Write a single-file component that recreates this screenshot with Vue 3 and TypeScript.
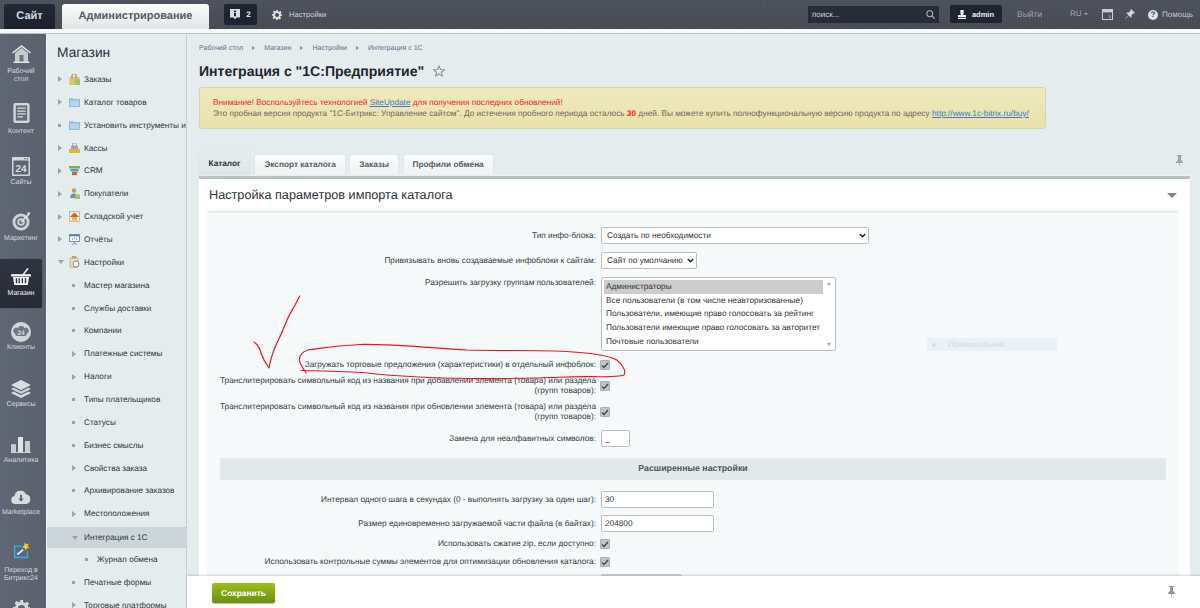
<script setup lang="ts">
interface RailItem { id: string; label: string[]; h: number; gap: number; active?: boolean }
interface MenuItem { label: string; level: number; arrow: 'right' | 'down' | 'dot'; icon?: string; active?: boolean }

const rail: RailItem[] = [
  { id: 'home', label: ['Рабочий', 'стол'], h: 58, gap: 5 },
  { id: 'doc', label: ['Контент'], h: 54, gap: 5 },
  { id: 'cal', label: ['Сайты'], h: 55, gap: 3 },
  { id: 'target', label: ['Маркетинг'], h: 55, gap: 4 },
  { id: 'basket', label: ['Магазин'], h: 49, gap: 5, active: true },
  { id: 'bubble', label: ['Клиенты'], h: 58, gap: 2 },
  { id: 'layers', label: ['Сервисы'], h: 57, gap: 3 },
  { id: 'bars', label: ['Аналитика'], h: 53, gap: 4 },
  { id: 'cloud', label: ['Marketplace'], h: 52, gap: 5 },
  { id: 'b24', label: ['Переход в', 'Битрикс24'], h: 58, gap: 8 },
  { id: 'gear', label: [], h: 30, gap: 0 },
]

const menu: MenuItem[] = [
  { label: 'Заказы', level: 0, arrow: 'right', icon: 'bag' },
  { label: 'Каталог товаров', level: 0, arrow: 'right', icon: 'folder' },
  { label: 'Установить инструменты и', level: 0, arrow: 'dot', icon: 'folder' },
  { label: 'Кассы', level: 0, arrow: 'right', icon: 'cash' },
  { label: 'CRM', level: 0, arrow: 'right', icon: 'crm' },
  { label: 'Покупатели', level: 0, arrow: 'right', icon: 'people' },
  { label: 'Складской учет', level: 0, arrow: 'right', icon: 'store' },
  { label: 'Отчёты', level: 0, arrow: 'right', icon: 'report' },
  { label: 'Настройки', level: 0, arrow: 'down', icon: 'clip' },
  { label: 'Мастер магазина', level: 1, arrow: 'dot' },
  { label: 'Службы доставки', level: 1, arrow: 'dot' },
  { label: 'Компании', level: 1, arrow: 'dot' },
  { label: 'Платежные системы', level: 1, arrow: 'right' },
  { label: 'Налоги', level: 1, arrow: 'right' },
  { label: 'Типы плательщиков', level: 1, arrow: 'dot' },
  { label: 'Статусы', level: 1, arrow: 'dot' },
  { label: 'Бизнес смыслы', level: 1, arrow: 'dot' },
  { label: 'Свойства заказа', level: 1, arrow: 'right' },
  { label: 'Архивирование заказов', level: 1, arrow: 'dot' },
  { label: 'Местоположения', level: 1, arrow: 'right' },
  { label: 'Интеграция с 1С', level: 1, arrow: 'down', active: true },
  { label: 'Журнал обмена', level: 2, arrow: 'dot' },
  { label: 'Печатные формы', level: 1, arrow: 'dot' },
  { label: 'Торговые платформы', level: 1, arrow: 'right' },
]

const crumbs = ['Рабочий стол', 'Магазин', 'Настройки', 'Интеграция с 1С']
const tabs = ['Экспорт каталога', 'Заказы', 'Профили обмена']
const groups = [
  'Администраторы',
  'Все пользователи (в том числе неавторизованные)',
  'Пользователи, имеющие право голосовать за рейтинг',
  'Пользователи имеющие право голосовать за авторитет',
  'Почтовые пользователи',
]
</script>

<template>
  <div class="page">
    <header class="top">
      <div class="tab-site">Сайт</div>
      <div class="tab-admin">Администрирование</div>
      <div class="notif">
        <svg width="10" height="11" viewBox="0 0 10 11"><path d="M0 0h10v8.500H6.500L5 10.500 3.500 8.500H0z" fill="#d8dbdf" /><rect x="4" y="1.500" width="2" height="1.500" fill="#1e2430" /><rect x="4" y="3.800" width="2" height="3.400" fill="#1e2430" /></svg>
        <b>2</b>
      </div>
      <div class="settings">
        <svg width="10" height="10" viewBox="0 0 24 24"><path fill-rule="evenodd" d="M10 0h4l.6 3.400 2.400 1 2.900-2 2.800 2.800-2 2.900 1 2.400L24 10v4l-3.300.6-1 2.400 2 2.900-2.800 2.800-2.900-2-2.400 1L14 24h-4l-.6-3.300-2.400-1-2.900 2-2.800-2.800 2-2.900-1-2.400L0 14v-4l3.300-.6 1-2.400-2-2.900 2.800-2.800 2.900 2 2.400-1zM12 7a5 5 0 1 0 0 10 5 5 0 0 0 0-10z" fill="#dfe2e5" /></svg>
        <span>Настройки</span>
      </div>
      <div class="spacer"></div>
      <div class="search">
        <span>поиск...</span>
        <svg width="9" height="9" viewBox="0 0 12 12"><circle cx="5" cy="5" r="3.900" fill="none" stroke="#a9aeb5" stroke-width="1.400" /><path d="M8 8l3.400 3.400" stroke="#a9aeb5" stroke-width="1.600" /></svg>
      </div>
      <div class="user">
        <svg width="8" height="9" viewBox="0 0 10 11"><path d="M3 0h4v4.500L6.300 6H10v3H0V6h3.700L3 4.500zM0 10h10v1H0z" fill="#f0f1f3" /></svg>
        <b>admin</b>
      </div>
      <span class="logout">Выйти</span>
      <span class="lang">RU<i></i></span>
      <svg class="win" width="11" height="11" viewBox="0 0 11 11"><rect x=".5" y=".5" width="10" height="10" fill="none" stroke="#c9ccd1" /><rect x="1" y="1" width="9" height="2.400" fill="#c9ccd1" /><path d="M6 7h3M7 8.500h2" stroke="#8e939b" /></svg>
      <svg class="pin" width="10" height="10" viewBox="0 0 10 10"><path d="M6 0l4 4-1 .6-.7-.3L6.500 6.200 6.600 8 5.800 8.600 3.600 6.400.8 9.600.4 9.200 3.600 6 1.400 4.200 2 3.400l1.800.1L5.700 1.700l-.3-.7z" fill="#d4d7db" /></svg>
      <div class="help">
        <span class="qm">?</span>
        <span>Помощь</span>
      </div>
    </header>

    <div class="strip"></div>

    <div class="body">
      <nav class="rail">
        <div v-for="r in rail" :key="r.id" class="rail-item" :class="{ on: r.active }" :style="{ height: r.h + 'px' }">
          <svg v-if="r.id === 'home'" width="19" height="18" viewBox="0 0 19 18"><path d="M9.500 0L19 7.500l-1 1L9.500 2 1 8.500l-1-1z" fill="#e1e4e6" /><path d="M3 8l6.500-5L16 8v9H3z" fill="#c6cacd" /><rect x="7.500" y="10" width="4" height="7" fill="#6d7480" /><rect x="1.500" y="16.500" width="16" height="1.500" fill="#e1e4e6" /></svg>
          <svg v-else-if="r.id === 'doc'" width="17" height="20" viewBox="0 0 17 21"><rect width="17" height="21" rx="2" fill="#d4d7da" /><rect x="2.500" y="2.500" width="12" height="16" fill="#656c79" /><path d="M4 5.500h9M4 8.500h9M4 11.500h9M4 14.500h6" stroke="#d8dbde" stroke-width="1.300" /></svg>
          <svg v-else-if="r.id === 'cal'" width="18" height="19" viewBox="0 0 18 19"><rect width="18" height="19" rx="1" fill="#d4d7da" /><rect x="1.500" y="3.500" width="15" height="14" fill="#5f6673" /><circle cx="13" cy="1.800" r=".8" fill="#5f6673" /><circle cx="15.500" cy="1.800" r=".8" fill="#5f6673" /><text x="9" y="15" text-anchor="middle" class="svg-24">24</text></svg>
          <svg v-else-if="r.id === 'target'" width="19" height="19" viewBox="0 0 20 20"><circle cx="9.500" cy="10.500" r="9" fill="#cfd3d6" /><circle cx="9.500" cy="10.500" r="6" fill="#666d7a" /><circle cx="9.500" cy="10.500" r="4" fill="#cfd3d6" /><circle cx="9.500" cy="10.500" r="2" fill="#666d7a" /><path d="M9.500 10.500L18 2" stroke="#e4e6e8" stroke-width="1.500" /><path d="M16 1l3-1-.5 2.500-2 1z" fill="#e4e6e8" /></svg>
          <svg v-else-if="r.id === 'basket'" width="20" height="18" viewBox="0 0 22 20"><path d="M12 9l6-8 1.500 1L14 9z" fill="#f4f5f6" /><rect x="0" y="8" width="22" height="2.500" fill="#f4f5f6" /><path d="M2 11h18l-1.500 9h-15z" fill="#f4f5f6" /><path d="M6 12.500v5.500M9 12.500v5.500M12.500 12.500v5.500M16 12.500v5.500" stroke="#2c303b" stroke-width="1.500" /></svg>
          <svg v-else-if="r.id === 'bubble'" width="20" height="20" viewBox="0 0 20 20"><circle cx="10" cy="10" r="10" fill="#d4d7da" /><path d="M4 11.500a3 3 0 0 1 3-5.500 3.500 3.500 0 0 1 6.500 0A3 3 0 0 1 16 11.500q0 2-2 2.500H6q-2-.5-2-2.500z" fill="#707784" /><text x="10" y="13" text-anchor="middle" class="svg-24b">24</text></svg>
          <svg v-else-if="r.id === 'layers'" width="20" height="18" viewBox="0 0 20 18"><path d="M10 0l10 5-10 5L0 5z" fill="#dadde0" /><path d="M2.500 7.500L10 11.300l7.500-3.800L20 9l-10 5L0 9z" fill="#c9cdd1" /><path d="M2.500 11.500L10 15.300l7.500-3.800L20 13l-10 5L0 13z" fill="#dadde0" /></svg>
          <svg v-else-if="r.id === 'bars'" width="20" height="16" viewBox="0 0 20 20" preserveAspectRatio="none"><rect x="0" y="9" width="5" height="10" fill="#c9cdd1" /><rect x="7" y="0" width="5" height="19" fill="#dfe1e4" /><rect x="14" y="5" width="5" height="14" fill="#c9cdd1" /><rect y="19" width="20" height="1" fill="#e6e8ea" /></svg>
          <svg v-else-if="r.id === 'cloud'" width="20" height="14" viewBox="0 0 21 15"><path d="M4.500 15a4.300 4.300 0 0 1-1-8.500A6.500 6.500 0 0 1 15.800 4.500 5.300 5.300 0 0 1 16 15z" fill="#d9dcdf" /><path d="M9.500 5h2v4h2l-3 3.500-3-3.500h2z" fill="#5f6673" /></svg>
          <svg v-else-if="r.id === 'b24'" width="19" height="17" viewBox="0 0 20 20"><path d="M1 4h9v1.800H2.800v11.400h13.400V11H18v8H1z" fill="#2fa8e6" /><path d="M4.500 15l.7-1.800 6-5 1.400 1.500-6 5.300z" fill="#e8ecef" /><path d="M14 0l1.300 2.600L18.500 2l-1.400 3L19.500 7l-3.200.5L15 10l-1.300-3-3-.5L13 4.500z" fill="#f3c93a" /></svg>
          <svg v-else width="17" height="17" viewBox="0 0 24 24"><path fill-rule="evenodd" d="M10 0h4l.6 3.400 2.400 1 2.900-2 2.800 2.800-2 2.900 1 2.400L24 10v4l-3.300.6-1 2.400 2 2.900-2.800 2.800-2.900-2-2.400 1L14 24h-4l-.6-3.300-2.400-1-2.900 2-2.800-2.800 2-2.900-1-2.400L0 14v-4l3.300-.6 1-2.400-2-2.900 2.800-2.800 2.900 2 2.400-1zM12 7a5 5 0 1 0 0 10 5 5 0 0 0 0-10z" fill="#d6d9dc" /></svg>
          <div class="rail-label" :style="{ marginTop: r.gap + 'px' }">
            <div v-for="l in r.label" :key="l">{{ l }}</div>
          </div>
        </div>
      </nav>

      <aside class="side">
        <div class="side-title">Магазин</div>
        <div
          v-for="m in menu"
          :key="m.label"
          class="mi"
          :class="['lv' + m.level, { on: m.active }]"
        >
          <span class="mark" :class="m.arrow"></span>
          <svg v-if="m.icon === 'bag'" class="mic" width="11" height="11" viewBox="0 0 11 11"><rect x=".5" y="3" width="10" height="8" fill="#dcc35c" /><rect x="6" y="5" width="5" height="6" fill="#a9c169" /><path d="M3 4V1.500a1.500 1.500 0 0 1 4 0V4" fill="none" stroke="#7e7a4c" /></svg>
          <svg v-else-if="m.icon === 'folder'" class="mic" width="11" height="10" viewBox="0 0 11 10"><path d="M0 1h4l1 1h6v8H0z" fill="#9cc4e4" /><rect x=".5" y="3" width="10" height="6.500" fill="#b5d5ef" stroke="#85aecf" stroke-width=".6" /></svg>
          <svg v-else-if="m.icon === 'cash'" class="mic" width="11" height="10" viewBox="0 0 11 10"><rect x="2" y="3" width="7" height="3" fill="#9fa5ab" /><rect x="3.500" y="0" width="4" height="3" fill="#dfe3e6" stroke="#7b8188" stroke-width=".5" /><rect x="0" y="6" width="11" height="4" fill="#e2b23e" /></svg>
          <svg v-else-if="m.icon === 'crm'" class="mic" width="11" height="9" viewBox="0 0 11 9"><rect width="11" height="2.500" fill="#7fb23c" /><rect x="1.500" y="3" width="8" height="2.500" fill="#4f9bd1" /><rect x="3" y="6" width="5" height="3" fill="#e0524a" /></svg>
          <svg v-else-if="m.icon === 'people'" class="mic" width="11" height="11" viewBox="0 0 11 11"><circle cx="5" cy="2.500" r="2.300" fill="#c79a6d" /><path d="M1 10q0-4.500 4-4.500t4 4.500z" fill="#6d90b0" /><rect x="6" y="6.500" width="5" height="4.500" fill="#a9c169" /></svg>
          <svg v-else-if="m.icon === 'store'" class="mic" width="11" height="11" viewBox="0 0 11 11"><rect x=".5" y=".5" width="10" height="10" fill="#f2ede1" stroke="#a8a08a" stroke-width=".6" /><path d="M5.500 1.500L10 6H1z" fill="#c9662c" /><rect x="3" y="6" width="5" height="3.500" fill="#e6b64a" /></svg>
          <svg v-else-if="m.icon === 'report'" class="mic" width="11" height="11" viewBox="0 0 11 11"><rect x=".5" y=".5" width="10" height="7" fill="#f2f5f7" stroke="#5c84ad" stroke-width=".8" /><rect x=".5" y=".5" width="10" height="1.800" fill="#5c84ad" /><path d="M3 5h1M5 4h1M7 5h1" stroke="#6b7680" /><path d="M5.500 7.500V9L3 11M5.500 9L8 11" stroke="#6b7680" stroke-width=".8" fill="none" /></svg>
          <svg v-else-if="m.icon === 'clip'" class="mic" width="11" height="12" viewBox="0 0 11 12"><rect x="1" y="1.500" width="8" height="10" rx="1" fill="#ecd9b0" stroke="#b49a6b" stroke-width=".6" /><rect x="3" y="0" width="4" height="2.500" fill="#a9a296" /><circle cx="7" cy="8" r="3" fill="#eef0f2" stroke="#7d858c" stroke-width=".9" /></svg>
          <span class="mt">{{ m.label }}</span>
        </div>
      </aside>

      <main class="main">
        <div class="crumbs">
          <template v-for="(c, i) in crumbs" :key="c">
            <span>{{ c }}</span>
            <i v-if="i < crumbs.length - 1" class="sep"></i>
          </template>
        </div>
        <div class="title-row">
          <h1>Интеграция с "1С:Предприятие"</h1>
          <svg width="12" height="12" viewBox="0 0 24 24"><path d="M12 2l3 6.900 7.500.7-5.700 4.900 1.700 7.300L12 18l-6.500 3.800 1.700-7.300L1.500 9.600 9 8.900z" fill="none" stroke="#8b9196" stroke-width="2.200" /></svg>
        </div>

        <div class="alert">
          <div class="red">Внимание! Воспользуйтесь технологией <a>SiteUpdate</a> для получения последних обновлений!</div>
          <div>Это пробная версия продукта "1С-Битрикс: Управление сайтом". До истечения пробного периода осталось <b class="red">30</b> дней. Вы можете купить полнофункциональную версию продукта по адресу <a>http://www.1c-bitrix.ru/buy/</a></div>
        </div>

        <div class="tabs">
          <div class="tab active">Каталог</div>
          <div v-for="t in tabs" :key="t" class="tab">{{ t }}</div>
          <div class="spacer"></div>
          <svg class="tabs-pin" width="9" height="12" viewBox="0 0 9 12"><path d="M2 0h5v1H6v4l2 2v1H5l-.5 4L4 8H1V7l2-2V1H2z" fill="#9aa5a9" /></svg>
        </div>

        <section class="box">
          <div class="box-head">
            <h2>Настройка параметров импорта каталога</h2>
            <i class="tri"></i>
          </div>
          <div class="card">
            <div class="row r17">
              <label>Тип инфо-блока:</label>
              <select class="sel w268"><option>Создать по необходимости</option></select>
            </div>
            <div class="row r17">
              <label>Привязывать вновь создаваемые инфоблоки к сайтам:</label>
              <select class="sel w96"><option>Сайт по умолчанию</option></select>
            </div>
            <div class="row top-label">
              <label>Разрешить загрузку группам пользователей:</label>
              <div class="list">
                <div class="opts">
                  <div v-for="(g, i) in groups" :key="g" class="opt" :class="{ sel1: i === 0 }">{{ g }}</div>
                </div>
                <div class="sb"><i class="up"></i><i class="dn"></i></div>
              </div>
            </div>
            <div class="row h18 first-check">
              <label>Загружать торговые предложения (характеристики) в отдельный инфоблок:</label>
              <span class="chk"><svg width="8" height="7" viewBox="0 0 8 7"><path d="M1 3.500L3 5.500 7 1" fill="none" stroke="#444" stroke-width="1.300" /></svg></span>
            </div>
            <div class="row two">
              <label>Транслитерировать символьный код из названия при добавлении элемента (товара) или раздела<br />(групп товаров):</label>
              <span class="chk"><svg width="8" height="7" viewBox="0 0 8 7"><path d="M1 3.500L3 5.500 7 1" fill="none" stroke="#444" stroke-width="1.300" /></svg></span>
            </div>
            <div class="row two mt6">
              <label>Транслитерировать символьный код из названия при обновлении элемента (товара) или раздела<br />(групп товаров):</label>
              <span class="chk"><svg width="8" height="7" viewBox="0 0 8 7"><path d="M1 3.500L3 5.500 7 1" fill="none" stroke="#444" stroke-width="1.300" /></svg></span>
            </div>
            <div class="row r17 mt8">
              <label>Замена для неалфавитных символов:</label>
              <input class="inp w29" value="_" />
            </div>
            <div class="sect">Расширенные настройки</div>
            <div class="row r17 mt11 mb7">
              <label>Интервал одного шага в секундах (0 - выполнять загрузку за один шаг):</label>
              <input class="inp w113" value="30" />
            </div>
            <div class="row r17 mb3">
              <label>Размер единовременно загружаемой части файла (в байтах):</label>
              <input class="inp w113" value="204800" />
            </div>
            <div class="row h18">
              <label>Использовать сжатие zip, если доступно:</label>
              <span class="chk"><svg width="8" height="7" viewBox="0 0 8 7"><path d="M1 3.500L3 5.500 7 1" fill="none" stroke="#444" stroke-width="1.300" /></svg></span>
            </div>
            <div class="row h18 mb3">
              <label>Использовать контрольные суммы элементов для оптимизации обновления каталога:</label>
              <span class="chk"><svg width="8" height="7" viewBox="0 0 8 7"><path d="M1 3.500L3 5.500 7 1" fill="none" stroke="#444" stroke-width="1.300" /></svg></span>
            </div>
            <div class="row r17">
              <label></label>
              <div class="btn-stub"></div>
            </div>
          </div>
        </section>
      </main>
    </div>

    <div class="ghost"><i></i><span>Прямоугольник</span></div>

    <svg class="ink" width="1200" height="608" viewBox="0 0 1200 608">
      <path d="M299.700 296C295 306 290 313 287 320 284 328 281 335 276 345 273 352 270 362 269 368 266 364 263 359 261 353 260 348 258 345 254 342" />
      <path d="M306 373C303 368 300 365 299.500 360 299 355 302 352 308 350 316 349 330 346 360 344.500 395 344 430 348 467 350 500 351 530 350 555 351 585 352 605 354 617 360 624 366 626 372 624 375 618 378 590 376 567 377 540 378 510 379 470 378.500 430 378 395 376 367 373 345 371 322 371 301 370.500" />
    </svg>

    <footer class="save">
      <button class="save-btn" type="button">Сохранить</button>
      <svg class="save-pin" width="9" height="12" viewBox="0 0 9 12"><path d="M2 0h5v1H6v4l2 2v1H5l-.5 4L4 8H1V7l2-2V1H2z" fill="#8d979b" /></svg>
    </footer>
  </div>
</template>

<style>
html, body { margin: 0; padding: 0; background: #e4ecee; }
</style>

<style scoped>
.page {
  position: relative;
  width: 1200px;
  height: 608px;
  overflow: hidden;
  display: flex;
  flex-direction: column;
  font-family: "Liberation Sans", Arial, sans-serif;
  text-rendering: geometricPrecision;
  background: #e4ecee;
  color: #2b3038;
}
.spacer { flex: 1; }

/* top bar */
.top {
  height: 29px;
  flex: none;
  display: flex;
  align-items: flex-start;
  background:
    repeating-linear-gradient(90deg, rgba(255, 255, 255, .025) 0 1px, transparent 1px 3px),
    repeating-linear-gradient(0deg, rgba(0, 0, 0, .03) 0 1px, transparent 1px 3px),
    linear-gradient(#4d525c, #464b55);
  box-sizing: border-box;
  padding-top: 4px;
}
.tab-site {
  margin-left: 4px;
  width: 51px;
  height: 25px;
  border-radius: 3px 3px 0 0;
  background: linear-gradient(#232936, #1a202c);
  color: #d9dce0;
  font-weight: 700;
  font-size: 11px;
  line-height: 25px;
  text-align: center;
}
.tab-admin {
  margin-left: 7px;
  width: 147px;
  height: 25px;
  border-radius: 3px 3px 0 0;
  background: linear-gradient(#fbfcfc, #dfe6e8);
  color: #545a60;
  font-weight: 700;
  font-size: 11px;
  line-height: 25px;
  text-align: center;
}
.notif {
  margin-left: 15px;
  width: 33px;
  height: 21px;
  border-radius: 2px;
  background: #1e2430;
  color: #e4e6e8;
  display: flex;
  align-items: center;
  justify-content: center;
  gap: 6px;
  font-size: 8px;
}
.settings {
  margin-left: 15px;
  height: 21px;
  display: flex;
  align-items: center;
  gap: 7px;
  color: #d0d3d7;
  font-size: 7.600px;
}
.search {
  width: 131px;
  height: 17px;
  margin-top: 2px;
  box-sizing: border-box;
  padding: 0 4px;
  display: flex;
  align-items: center;
  justify-content: space-between;
  background: #272c39;
  color: #d3d6da;
  font-size: 8px;
  border-radius: 1px;
}
.user {
  margin-left: 11px;
  margin-top: 1px;
  width: 52px;
  height: 18px;
  border-radius: 2px;
  background: #1e2430;
  color: #eef0f2;
  display: flex;
  align-items: center;
  justify-content: center;
  gap: 6px;
  font-size: 7.500px;
}
.logout {
  margin-left: 15px;
  margin-top: 5px;
  width: 53px;
  color: #a1a5ab;
  font-size: 8.500px;
  line-height: 10px;
}
.lang {
  margin-top: 5px;
  width: 32px;
  color: #a9adb3;
  font-size: 8px;
  line-height: 10px;
}
.lang i {
  display: inline-block;
  margin: 0 0 1px 2px;
  border-left: 2px solid transparent;
  border-right: 2px solid transparent;
  border-top: 2px solid #a9adb3;
}
.win { margin-top: 5px; }
.pin { margin: 5px 0 0 12px; }
.help {
  flex: none;
  width: 45px;
  margin: 2px 7px 0 13px;
  height: 17px;
  display: flex;
  align-items: center;
  gap: 4px;
  color: #c3c6ca;
  font-size: 8px;
}
.qm {
  flex: none;
  width: 10px;
  height: 10px;
  border-radius: 50%;
  background: #dfe1e4;
  color: #474c56;
  font-weight: 700;
  font-size: 8px;
  line-height: 10px;
  text-align: center;
}
.strip {
  flex: none;
  height: 4px;
  background: #f7f9f9;
  border-bottom: 1px solid #b9c0c3;
}

.body { flex: 1; min-height: 0; display: flex; overflow: hidden; }

/* rail */
.rail {
  flex: none;
  width: 46px;
  background: linear-gradient(90deg, #5f6775, #5a6270);
  border-right: 1px solid #f4f7f7;
  overflow: hidden;
}
.rail-item {
  box-sizing: border-box;
  width: 42px;
  padding-top: 11px;
  display: flex;
  flex-direction: column;
  align-items: center;
}
.rail-label {
  font-size: 7px;
  line-height: 8px;
  color: #d3d7dc;
  text-align: center;
  white-space: nowrap;
}
.rail-item.on {
  margin: 3px 0;
  padding-top: 8px;
  background: linear-gradient(#2f3440, #262b36);
  border-radius: 0 2px 2px 0;
  box-shadow: 0 0 1px #22262f;
}
.rail-item.on .rail-label { color: #f1f2f4; }
.svg-24 { font: 700 10px "Liberation Sans", sans-serif; fill: #d9dcdf; }
.svg-24b { font: 700 6.500px "Liberation Sans", sans-serif; fill: #d6d9dc; }

/* side */
.side {
  flex: none;
  width: 139px;
  background: #e4ecee;
  border-right: 1px solid #c4d2da;
  overflow: hidden;
}
.side-title {
  height: 34px;
  box-sizing: border-box;
  padding: 11px 0 0 10px;
  font-size: 13.800px;
  line-height: 16px;
  color: #2a333d;
}
.mi {
  position: relative;
  height: 22.860px;
  display: flex;
  align-items: center;
  white-space: nowrap;
  font-size: 8.200px;
  color: #2f3640;
}
.mi.on { background: #cbd5da; height: 21px; margin: 2px 0 -0.140px; }
.mark { position: absolute; }
.mark.right {
  border-left: 4px solid #9aa2a6;
  border-top: 3px solid transparent;
  border-bottom: 3px solid transparent;
}
.mark.down {
  border-top: 4px solid #9aa2a6;
  border-left: 3px solid transparent;
  border-right: 3px solid transparent;
}
.mark.dot { width: 3px; height: 3px; background: #9aa2a6; }
.lv0 .mark { left: 11px; }
.lv1 .mark { left: 25px; }
.lv2 .mark { left: 38px; }
.mic { position: absolute; left: 22px; }
.mt { position: absolute; left: 37px; }
.lv2 .mt { left: 50px; }

/* main */
.main { flex: 1; min-width: 0; padding-left: 12px; }
.crumbs {
  height: 21px;
  padding-top: 7px;
  box-sizing: border-box;
  display: flex;
  align-items: center;
  font-size: 7.050px;
  color: #5f7092;
}
.sep {
  width: 0; height: 0;
  margin: 0 9px;
  border-left: 3px solid #8c949b;
  border-top: 2px solid transparent;
  border-bottom: 2px solid transparent;
}
.title-row { height: 32px; display: flex; align-items: center; gap: 9px; }
h1 {
  margin: 0;
  font-size: 14.060px;
  font-weight: 700;
  color: #22262c;
}
.alert {
  width: 847px;
  height: 42px;
  box-sizing: border-box;
  padding: 9px 0 0 13px;
  border: 1px solid #dcd5a1;
  border-radius: 3px;
  background: linear-gradient(#efe9c0, #e9e1a9);
  font-size: 8.250px;
  line-height: 11px;
  color: #6c6a58;
  white-space: nowrap;
}
.red { color: #f2222d; }
.alert a { color: #3d78c9; text-decoration: underline; }
.tabs {
  margin-top: 20px;
  height: 26px;
  width: 991px;
  display: flex;
  align-items: flex-end;
  gap: 5.500px;
  position: relative;
}
.tab {
  height: 20px;
  box-sizing: border-box;
  padding: 0 9px;
  background: linear-gradient(#fbfcfc, #eef2f3);
  color: #555b60;
  font-size: 8.250px;
  font-weight: 700;
  line-height: 19px;
  border-radius: 2px 2px 0 0;
  box-shadow: 0 0 1px #c2cbce;
}
.tab.active {
  height: 23px;
  padding: 0 9.500px;
  background: linear-gradient(#e7edef, #dfe6e8);
  color: #2a2e33;
  line-height: 23px;
}
.tabs-pin { position: absolute; right: 6px; top: 6px; }
.box {
  margin-top: 1px;
  width: 991px;
  border-top: 3px solid #b9c3c6;
  background: #fff;
  box-shadow: 0 -1px 0 #edf2f3;
  padding: 0 12px 0 8px;
  box-sizing: border-box;
}
.box-head {
  height: 32px;
  display: flex;
  align-items: center;
  justify-content: space-between;
  padding: 0 2px 0 2px;
}
h2 {
  margin: 0;
  font-size: 12.700px;
  font-weight: 400;
  color: #2c3136;
}
.tri {
  margin: 0 -1px 0 0;
  width: 0; height: 0;
  border-left: 5px solid transparent;
  border-right: 5px solid transparent;
  border-top: 5px solid #7f868a;
}
.card {
  background: #f5f9fa;
  border-top: 1px solid #dfe6e8;
  padding-top: 15px;
  height: 420px;
  font-size: 8.270px;
}
.row {
  display: grid;
  grid-template-columns: 389px 1fr;
  column-gap: 5px;
  align-items: center;
  margin-bottom: 8px;
}
.row > label {
  text-align: right;
  color: #333a40;
  line-height: 10px;
  white-space: nowrap;
}
.row.r17 { height: 17px; }
.row.h18 { height: 18px; margin-bottom: 0; }
.row.two { height: 20px; margin-bottom: 0; }
.row.top-label { align-items: start; margin-bottom: 5px; }
.row.top-label > label { padding-top: 1px; }
.first-check { margin-bottom: 2px !important; }
.mt6 { margin-top: 6px; }
.mt8 { margin-top: 8px; }
.mt11 { margin-top: 11px; }
.row.mb7 { margin-bottom: 7px; }
.row.mb3 { margin-bottom: 3px; }
.sel, .inp {
  box-sizing: border-box;
  height: 17px;
  border: 1px solid #b7bfc3;
  border-radius: 2px;
  background: #fff;
  color: #333;
  font: 8.250px "Liberation Sans", sans-serif;
  text-rendering: geometricPrecision;
  margin: 0;
  outline: none;
}
.sel {
  appearance: none;
  -webkit-appearance: none;
  padding: 0 12px 0 5px;
  background-image: url("data:image/svg+xml,%3Csvg xmlns='http://www.w3.org/2000/svg' width='7' height='5' viewBox='0 0 7 5'%3E%3Cpath d='M.8 1l2.700 2.700L6.200 1' fill='none' stroke='%23222' stroke-width='1.500'/%3E%3C/svg%3E");
  background-repeat: no-repeat;
  background-position: right 2px center;
  background-size: 7px 5px;
}
.inp { padding: 0 3px; }
.w268 { width: 268px; }
.w96 { width: 96px; }
.w29 { width: 29px; }
.w113 { width: 113px; }
.list {
  box-sizing: border-box;
  width: 235px;
  height: 74px;
  border: 1px solid #b7bfc3;
  border-radius: 2px;
  background: #fff;
  display: flex;
  padding: 2px 0 0 2px;
}
.opts { flex: 1; }
.opt { height: 13.700px; line-height: 13.700px; padding-left: 2px; color: #333; white-space: nowrap; }
.opt.sel1 { background: #cdcdcd; }
.sb {
  width: 12px;
  display: flex;
  flex-direction: column;
  justify-content: space-between;
  align-items: center;
  padding: 2px 0 4px;
}
.sb i { width: 0; height: 0; border-left: 2px solid transparent; border-right: 2px solid transparent; }
.sb .up { border-bottom: 3px solid #a5a8ab; }
.sb .dn { border-top: 3px solid #a5a8ab; }
.chk {
  margin-left: -1px;
  width: 10px;
  height: 10px;
  border-radius: 2px;
  background: #c0c5c8;
  box-shadow: inset 0 0 0 1px #a9afb3;
  display: flex;
  align-items: center;
  justify-content: center;
}
.sect {
  margin: 11px 12px 0 13px;
  height: 22px;
  background: #e2e9ea;
  color: #4d5358;
  font-size: 8.800px;
  font-weight: 700;
  line-height: 21px;
  text-align: center;
}
.btn-stub {
  width: 81px;
  height: 17px;
  border-radius: 2px;
  background: #ccd3d6;
}

/* overlays */
.ghost {
  position: absolute;
  left: 927px;
  top: 338px;
  width: 130px;
  height: 13px;
  display: flex;
  align-items: center;
  background: #e8f2f8;
  font-size: 8px;
  color: #d0dbe2;
}
.ghost i { width: 4px; height: 4px; border-radius: 50%; background: #d5e2ea; margin: 0 12px 0 5px; }
.ink {
  position: absolute;
  left: 0;
  top: 0;
  pointer-events: none;
}
.ink path { fill: none; stroke: #f0141e; stroke-width: 1.200; stroke-linecap: round; stroke-linejoin: round; }
.save {
  position: absolute;
  left: 187px;
  right: 0;
  bottom: 0;
  height: 32px;
  background: #fff;
  box-shadow: 0 -1px 2px rgba(120, 130, 135, .35);
  display: flex;
  align-items: center;
  justify-content: space-between;
  padding: 0 24px 0 25px;
}
.save-btn {
  width: 63px;
  height: 20px;
  margin-top: 2px;
  padding: 0;
  border: 0;
  border-radius: 2px;
  background: linear-gradient(#9cbe1d, #6b9009);
  box-shadow: 0 1px 1px rgba(0, 0, 0, .25);
  color: #fff;
  font: 700 8.400px "Liberation Sans", sans-serif;
  text-rendering: geometricPrecision;
}
</style>
